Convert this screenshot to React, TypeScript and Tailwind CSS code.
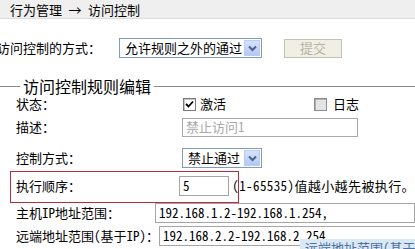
import React from "react";

const font = {
  fontFamily:
    '"Noto Sans Mono CJK SC", "Noto Sans CJK SC", "DejaVu Sans", sans-serif',
};

function Arrow() {
  return (
    <div className="flex h-full w-[16px] items-center justify-center border border-[#b9cbf3] bg-gradient-to-b from-[#d6e2fd] to-[#b4c8f6]">
      <svg width="9" height="7" viewBox="0 0 9 7">
        <path d="M1 1.5 L4.5 5 L8 1.5" fill="none" stroke="#4d6185" strokeWidth="2" />
      </svg>
    </div>
  );
}

function Select({ text, width }: { text: string; width: string }) {
  return (
    <div
      className={`flex h-[20px] items-center justify-between border border-[#7f9db9] bg-white p-[1px] ${width}`}
    >
      <span className="pl-[4px] text-[13px] leading-[16px] text-black">{text}</span>
      <Arrow />
    </div>
  );
}

export default function App() {
  return (
    <div
      className="relative h-[249px] w-[415px] overflow-hidden bg-white text-[13px] text-black"
      style={font}
    >
      {/* top bar */}
      <div className="flex h-[19px] items-center border-b border-[#dcdcdc] bg-[#efefef] pl-[10px] leading-[19px]">
        行为管理 → 访问控制
      </div>

      {/* row 1 */}
      <div className="mt-[19px] flex h-[20px] items-center">
        <span className="ml-[-3px] w-[122px] leading-[20px]">访问控制的方式：</span>
        <Select text="允许规则之外的通过" width="w-[143px]" />
        <div className="ml-[22px] flex h-[19px] w-[58px] items-center justify-center border border-[#c5c2b2] bg-[#f0efe6] text-[13px] text-[#b8b4a4]">
          提交
        </div>
      </div>

      {/* legend */}
      <div className="mt-[19px] flex h-[18px] items-center">
        <div className="h-px w-[20px] bg-[#8a8a8a]" />
        <span className="px-[3px] text-[16px] leading-[18px]">访问控制规则编辑</span>
        <div className="h-px flex-1 bg-[#8a8a8a]" />
      </div>

      {/* 状态 */}
      <div className="flex h-[18px] items-center">
        <span className="ml-[16px] w-[167px]">状态：</span>
        <div className="flex h-[13px] w-[13px] items-center justify-center border border-[#7a7a7a] bg-white shadow-[inset_1px_1px_0_#c8c8c8]">
          <svg width="9" height="9" viewBox="0 0 9 9">
            <path d="M1 4 L3.5 6.5 L8 1.5" fill="none" stroke="#000" strokeWidth="1.8" />
          </svg>
        </div>
        <span className="ml-[4px] w-[114px]">激活</span>
        <div className="h-[13px] w-[13px] border border-[#8c8c8c] bg-[#e4e4e4] shadow-[inset_1px_1px_0_#b0b0b0]" />
        <span className="ml-[6px]">日志</span>
      </div>

      {/* 描述 */}
      <div className="mt-[4px] flex h-[20px] items-center">
        <span className="ml-[16px] w-[166px]">描述：</span>
        <div className="flex h-[19px] w-[176px] items-center border border-[#a9a9a9] bg-white pl-[3px] text-[#a8a8a8]">
          禁止访问1
        </div>
      </div>

      {/* 控制方式 */}
      <div className="mt-[11px] flex h-[20px] items-center">
        <span className="ml-[16px] w-[166px]">控制方式：</span>
        <Select text="禁止通过" width="w-[80px]" />
      </div>

      {/* 执行顺序 */}
      <div className="relative mt-[8px] flex h-[20px] items-center">
        <span className="ml-[16px] w-[166px]">执行顺序：</span>
        <div className="flex h-[20px] w-[51px] items-center border border-[#a5a5a5] bg-white pl-[3px]">
          5
        </div>
        <span className="ml-[3px] whitespace-nowrap tracking-[0.4px]">(1-65535)值越小越先被执行。</span>
        <div className="pointer-events-none absolute left-[10px] top-[-5px] h-[32px] w-[229px] border border-[#c0283e]" />
      </div>

      {/* 主机IP */}
      <div className="mt-[7px] flex h-[20px] items-center">
        <span className="ml-[16px] w-[166px] whitespace-nowrap">主机IP地址范围：</span>
        <div className="flex h-[20px] w-[260px] shrink-0 items-center border border-[#a5a5a5] bg-white pl-[3px] whitespace-nowrap">
          192.168.1.2-192.168.1.254,
        </div>
      </div>

      {/* 远端 */}
      <div className="relative mt-[2px] flex h-[21px] items-center">
        <span className="ml-[16px] w-[166px] whitespace-nowrap">远端地址范围(基于IP)：</span>
        <div className="flex h-[20px] w-[260px] shrink-0 items-center border border-[#a5a5a5] bg-white pl-[3px] whitespace-nowrap">
          192.168.2.2-192.168.2.254.
        </div>
        <div className="absolute left-[300px] top-[14px] h-[20px] w-[140px] whitespace-nowrap bg-[#d9e8f6] pl-[5px] pt-[1px] leading-[16px] text-[#4e6f98]">
          远端地址范围(基于IP)
        </div>
      </div>
    </div>
  );
}
